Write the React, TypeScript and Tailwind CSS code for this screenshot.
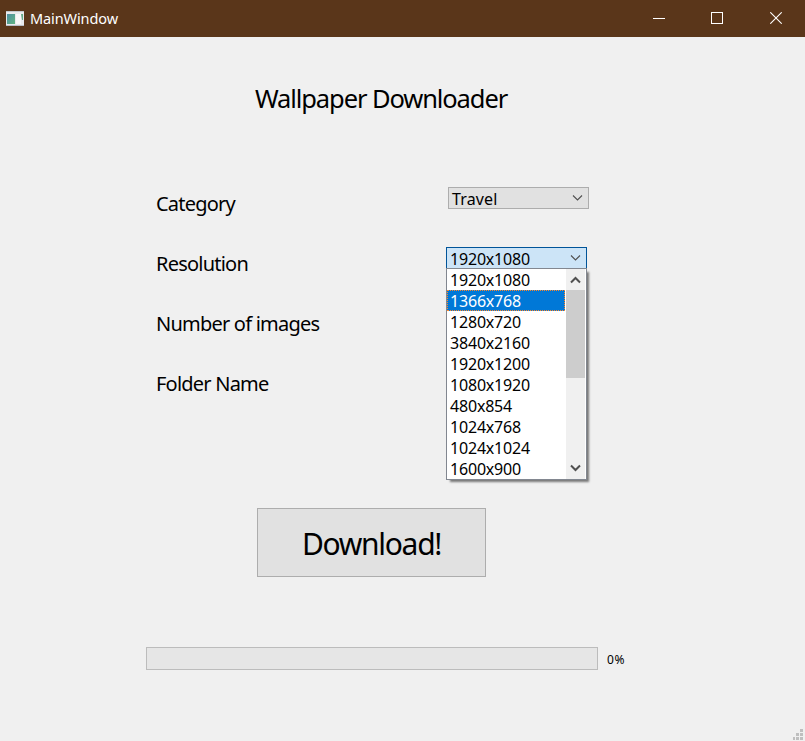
import React from "react";

const resolutions = [
  "1920x1080",
  "1366x768",
  "1280x720",
  "3840x2160",
  "1920x1200",
  "1080x1920",
  "480x854",
  "1024x768",
  "1024x1024",
  "1600x900",
];

function TitleBar() {
  return (
    <header className="flex h-[37px] items-center bg-[#5a361a] pl-[6px] text-white">
      <svg width="18" height="16" viewBox="0 0 18 16" className="mr-[6px] shrink-0">
        <defs>
          <linearGradient id="pane" x1="0" y1="0" x2="1" y2="1">
            <stop offset="0" stopColor="#4d8fa3" />
            <stop offset="1" stopColor="#62b480" />
          </linearGradient>
        </defs>
        <rect x="0" y="0" width="18" height="15" fill="#e9eaec" />
        <rect x="0" y="0" width="18" height="1" fill="#c3c7cc" />
        <rect x="0" y="14" width="18" height="1" fill="#b9bec5" />
        <rect x="1" y="3" width="8" height="10" fill="url(#pane)" />
        <rect x="10" y="3" width="5" height="10" fill="#f8f8f8" />
        <path d="M15 3h2v6h-1z" fill="#63aa86" />
      </svg>
      <h1 className="grow pb-[2px] text-[14.5px] leading-5 tracking-[-0.1px]">MainWindow</h1>
      <button className="flex h-full w-[58px] items-center justify-center">
        <svg width="12" height="12" viewBox="0 0 12 12" shapeRendering="crispEdges">
          <path d="M0 5h12v1H0z" fill="#fff" />
        </svg>
      </button>
      <button className="flex h-full w-[58px] items-center justify-center pb-[1px]">
        <svg width="12" height="12" viewBox="0 0 12 12" shapeRendering="crispEdges">
          <path d="M.5.5h11v11H.5z" fill="none" stroke="#fff" />
        </svg>
      </button>
      <button className="flex h-full w-[59px] items-center justify-center pb-[1px]">
        <svg width="12" height="12" viewBox="0 0 12 12">
          <path d="M.3.3l11.4 11.4M11.7.3L.3 11.7" fill="none" stroke="#fff" strokeWidth="1.1" />
        </svg>
      </button>
    </header>
  );
}

function Chevron() {
  return (
    <svg width="12" height="8" viewBox="0 0 12 8" className="shrink-0">
      <path d="M1 1.5L5.5 6 10 1.5" fill="none" stroke="#505050" strokeWidth="1.1" />
    </svg>
  );
}

function Popup() {
  return (
    <div className="absolute -left-px top-[20px] z-10 flex h-[212px] w-[141px] border border-[#828790] bg-white pr-px shadow-[3px_3px_2px_-1px_rgba(0,0,0,0.5)]">
      <ul className="w-[119px]">
        {resolutions.map((r) => (
          <li
            key={r}
            className={
              r === "1366x768"
                ? "h-[21px] w-[118px] bg-[#0078d7] pl-[3px] text-base leading-[22px] tracking-[-0.19px] text-white outline-1 -outline-offset-1 outline-dotted outline-[#ff8728]"
                : "h-[21px] pl-[3px] text-base leading-[22px] tracking-[-0.19px]"
            }
          >
            {r}
          </li>
        ))}
      </ul>
      <div className="flex w-[19px] flex-col items-center bg-[#f0f0f0]">
        <div className="flex h-[21px] items-center">
          <svg width="11" height="8" viewBox="0 0 11 8">
            <path d="M1 6.5L5.5 2 10 6.5" fill="none" stroke="#505050" strokeWidth="2" />
          </svg>
        </div>
        <div className="h-[88px] w-full bg-[#cdcdcd]" />
        <div className="mt-auto flex h-[21px] items-center pb-[1px]">
          <svg width="11" height="8" viewBox="0 0 11 8">
            <path d="M1 1.5L5.5 6 10 1.5" fill="none" stroke="#505050" strokeWidth="2" />
          </svg>
        </div>
      </div>
    </div>
  );
}

export default function App() {
  return (
    <div className="flex h-[741px] w-[805px] flex-col overflow-hidden bg-[#f0f0f0] font-['Noto_Sans',sans-serif] text-black">
      <TitleBar />
      <main className="flex grow flex-col">
        <h2 className="ml-[255px] mt-[43px] whitespace-nowrap text-[25.5px] leading-9 tracking-[-1.1px]">Wallpaper Downloader</h2>

        <section className="ml-[156px] mt-[58px] flex">
          <div className="w-[290px] text-[20px] leading-[60px] tracking-[-0.78px]">
            <p className="h-[60px]">Category</p>
            <p className="h-[60px]">Resolution</p>
            <p className="h-[60px]">Number of images</p>
            <p className="h-[60px]">Folder Name</p>
          </div>
          <div className="mt-[13px] flex flex-col gap-[38px]">
            <div className="ml-[2px] flex h-[22px] w-[141px] items-center justify-between border border-[#adadad] bg-[#e1e1e1] pl-[3px] pr-[4px]">
              <span className="pt-[2px] text-base leading-[22px] tracking-[0.15px]">Travel</span>
              <Chevron />
            </div>
            <div className="relative flex h-[22px] w-[141px] items-center justify-between border border-[#005499] bg-[#cce4f7] pl-[3px] pr-[4px]">
              <span className="pt-[2px] text-base leading-[22px] tracking-[-0.19px]">1920x1080</span>
              <Chevron />
              <Popup />
            </div>
          </div>
        </section>

        <button className="ml-[257px] mt-[94px] h-[69px] w-[229px] border border-[#adadad] bg-[#e1e1e1] pt-[3px] text-[30px] leading-[64px] tracking-[-1.3px]">
          Download!
        </button>

        <div className="ml-[146px] mt-[70px] flex items-center">
          <div className="h-[23px] w-[452px] border border-[#bcbcbc] bg-[#e6e6e6]" />
          <span className="ml-[9px] pt-[2px] text-[12px] leading-4 tracking-[0.6px]">0%</span>
        </div>

        <footer className="mt-auto flex justify-end pb-[1px] pr-[2px]">
          <svg width="10" height="11" viewBox="0 0 10 11" shapeRendering="crispEdges" fill="#bfbfbf">
            <path d="M7 0h3v3H7zM3 4h3v3H3zM7 4h3v3H7zM0 8h2v3H0zM3 8h3v3H3zM7 8h3v3H7z" />
          </svg>
        </footer>
      </main>
    </div>
  );
}
